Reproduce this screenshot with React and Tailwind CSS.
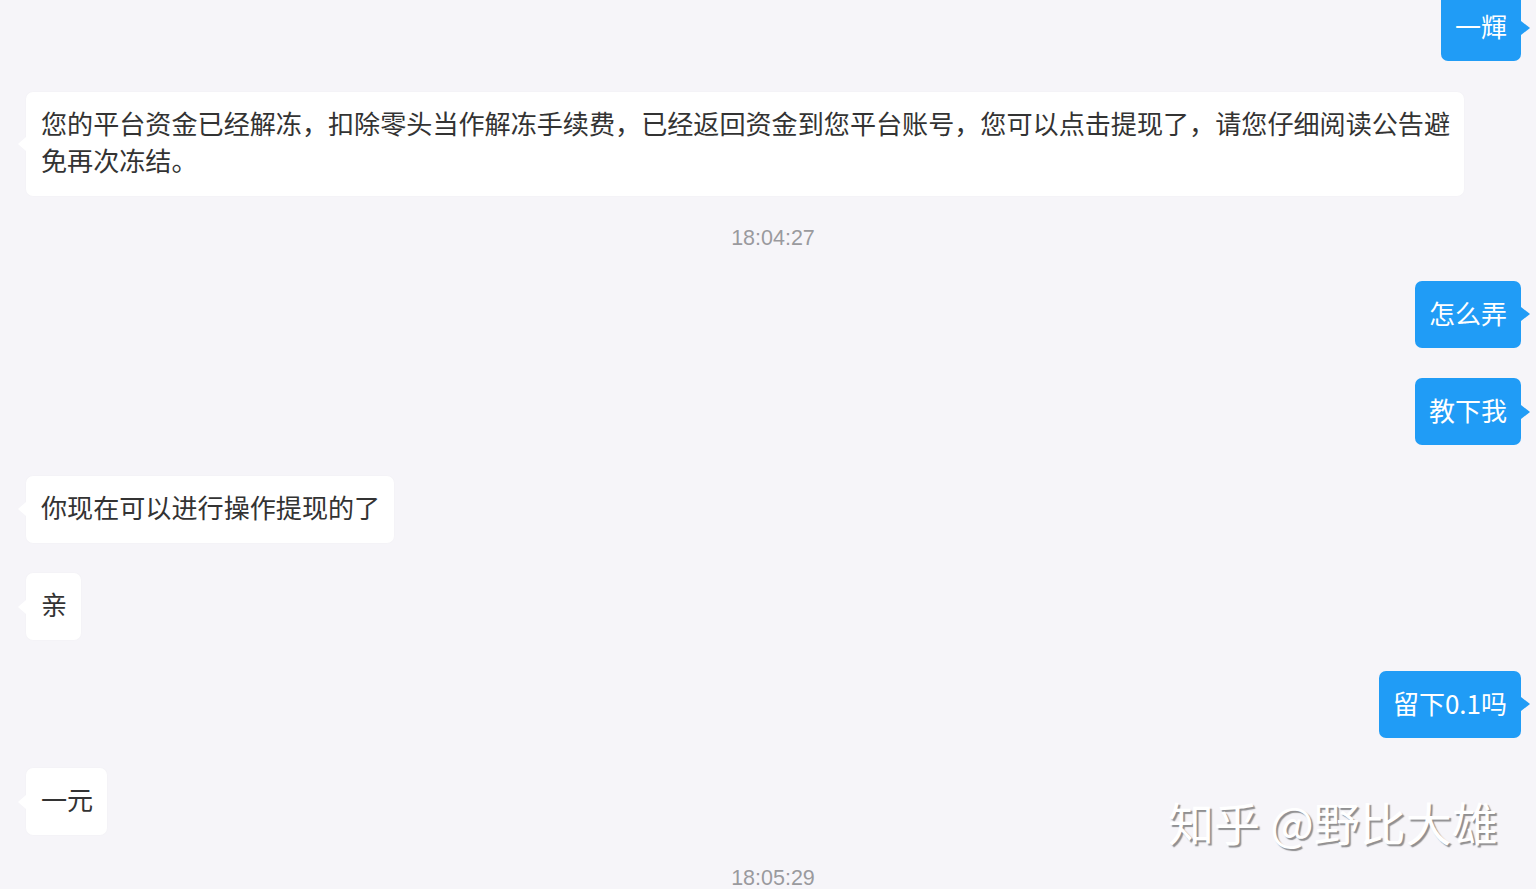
import React from "react"

const FONT = { fontFamily: '"Noto Sans CJK SC", "Noto Sans", sans-serif' }

const messages = [
  { side: "right", text: "一輝" },
  {
    side: "left",
    lines: [
      "您的平台资金已经解冻，扣除零头当作解冻手续费，已经返回资金到您平台账号，您可以点击提现了，请您仔细阅读公告避",
      "免再次冻结。",
    ],
  },
  { side: "time", text: "18:04:27" },
  { side: "right", text: "怎么弄" },
  { side: "right", text: "教下我" },
  { side: "left", text: "你现在可以进行操作提现的了" },
  { side: "left", text: "亲" },
  { side: "right", text: "留下0.1吗" },
  { side: "left", text: "一元" },
  { side: "time", text: "18:05:29" },
]

const LeftBubble = ({ msg }) => (
  <div className="flex justify-start pl-[26px]">
    <div className="relative bg-white rounded-[7px] pl-[15px] pr-[14px] pt-[13px] pb-[17px] text-[26.1px] leading-[37px] text-[#333333] shadow-[0_0_2px_rgba(0,0,0,0.03)]">
      <span className="absolute right-full top-1/2 -translate-y-1/2 w-0 h-0 border-y-[7px] border-y-transparent border-r-[8px] border-r-white" />
      {msg.lines
        ? msg.lines.map((l, i) => (
            <div key={i} className="whitespace-nowrap">
              {l}
            </div>
          ))
        : <div className="whitespace-nowrap">{msg.text}</div>}
    </div>
  </div>
)

const RightBubble = ({ msg }) => (
  <div className="flex justify-end pr-[15px]">
    <div className="relative bg-[#209cf6] rounded-[7px] px-[14px] pt-[13px] pb-[17px] text-[26px] leading-[37px] text-white whitespace-nowrap">
      {msg.text}
      <span className="absolute left-full top-1/2 -translate-y-1/2 w-0 h-0 border-y-[7px] border-y-transparent border-l-[9px] border-l-[#209cf6]" />
    </div>
  </div>
)

const Time = ({ msg }) => (
  <div
    className="flex justify-center text-[21.5px] leading-[24px] text-[#9a9a9e] pl-[10px]"
    style={{ fontFamily: '"Liberation Sans", Arial, sans-serif' }}
  >
    {msg.text}
  </div>
)

export default function App() {
  return (
    <div className="relative w-[1536px] h-[889px] overflow-hidden bg-[#f6f5f9]" style={FONT}>
      <div className="flex flex-col gap-[30.5px] -mt-[6px]">
        {messages.map((m, i) =>
          m.side === "left" ? (
            <LeftBubble key={i} msg={m} />
          ) : m.side === "right" ? (
            <RightBubble key={i} msg={m} />
          ) : (
            <Time key={i} msg={m} />
          )
        )}
      </div>

      {/* watermark */}
      <div className="absolute left-[1168px] top-[793px] text-[46px] leading-[56px] text-white whitespace-nowrap [text-shadow:2px_2px_1px_rgba(60,60,60,0.55)]">
        知乎 @野比大雄
      </div>
    </div>
  )
}
